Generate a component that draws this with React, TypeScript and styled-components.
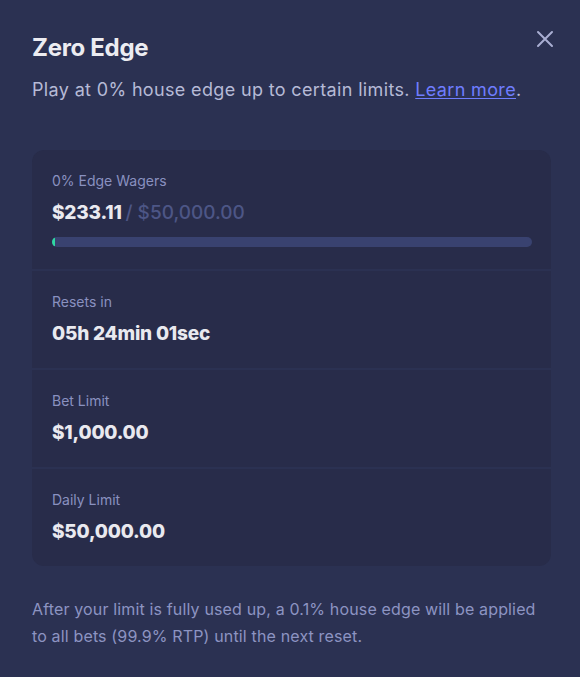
import React from "react";
import styled, { createGlobalStyle } from "styled-components";

const Global = createGlobalStyle`
  html, body { margin: 0; padding: 0; background: #2b3152; }
  body { font-family: Inter, "Noto Sans", sans-serif; -webkit-font-smoothing: antialiased; }
`;

const Modal = styled.div`
  width: 580px;
  height: 677px;
  box-sizing: border-box;
  background: #2b3152;
  padding: 32px 29px 0 32px;
  position: relative;
  display: flex;
  flex-direction: column;
`;

const Title = styled.h1`
  margin: 0;
  font-size: 24px;
  line-height: 32px;
  font-weight: 700;
  color: #ececf1;
  letter-spacing: -0.3px;
`;

const Subtitle = styled.p`
  margin: 12px 0 0;
  font-size: 18px;
  line-height: 28px;
  color: #b6bad6;
  letter-spacing: 0.35px;
`;

const Link = styled.a`
  color: #6f7dff;
  text-decoration: underline;
  text-underline-offset: 2px;
`;

const Close = styled.button`
  position: absolute;
  top: 29px;
  right: 25px;
  width: 20px;
  height: 20px;
  padding: 0;
  border: 0;
  background: none;
  color: #a9aed2;
  display: flex;
  align-items: center;
  justify-content: center;
`;

const Card = styled.div`
  margin-top: 46px;
  border-radius: 12px;
  overflow: hidden;
  display: flex;
  flex-direction: column;
  gap: 2px;
`;

const Section = styled.div`
  background: #282c4a;
  padding: 21px 19px 22px 20px;
  display: flex;
  flex-direction: column;
`;

const Label = styled.div`
  font-size: 14px;
  line-height: 20px;
  color: #8a91c0;
`;

const Value = styled.div`
  margin-top: 10px;
  font-size: 19px;
  line-height: 24px;
  font-weight: 800;
  color: #e9e9ef;
  letter-spacing: -0.2px;
`;

const Muted = styled.span`
  font-weight: 500;
  color: #4d5686;
  letter-spacing: 0px;
`;

const Track = styled.div`
  margin-top: 12px;
  height: 10px;
  border-radius: 5px;
  background: #394270;
  overflow: hidden;
`;

const Fill = styled.div`
  height: 100%;
  background: #2fd8a2;
  border-radius: 2px;
`;

const Footer = styled.p`
  margin: 30px 0 0;
  max-width: 512px;
  font-size: 16px;
  line-height: 27px;
  color: #8d94c2;
  letter-spacing: 0.15px;
`;

const rows = [
  { label: "Resets in", value: "05h 24min 01sec" },
  { label: "Bet Limit", value: "$1,000.00" },
  { label: "Daily Limit", value: "$50,000.00" },
];

export default function App() {
  const pct = (233.11 / 50000) * 100;
  return (
    <>
      <Global />
      <Modal>
        <Title>Zero Edge</Title>
        <Subtitle>
          Play at 0% house edge up to certain limits. <Link href="#">Learn more</Link>.
        </Subtitle>
        <Close aria-label="Close">
          <svg width="18" height="18" viewBox="0 0 18 18" fill="none">
            <path d="M2 2L16 16M16 2L2 16" stroke="currentColor" strokeWidth="2" strokeLinecap="round" />
          </svg>
        </Close>
        <Card>
          <Section>
            <Label>0% Edge Wagers</Label>
            <Value>
              $233.11 <Muted>/ $50,000.00</Muted>
            </Value>
            <Track>
              <Fill style={{ width: `max(3px, ${pct}%)` }} />
            </Track>
          </Section>
          {rows.map((r) => (
            <Section key={r.label}>
              <Label>{r.label}</Label>
              <Value>{r.value}</Value>
            </Section>
          ))}
        </Card>
        <Footer>
          After your limit is fully used up, a 0.1% house edge will be applied to all bets (99.9% RTP) until the next reset.
        </Footer>
      </Modal>
    </>
  );
}
